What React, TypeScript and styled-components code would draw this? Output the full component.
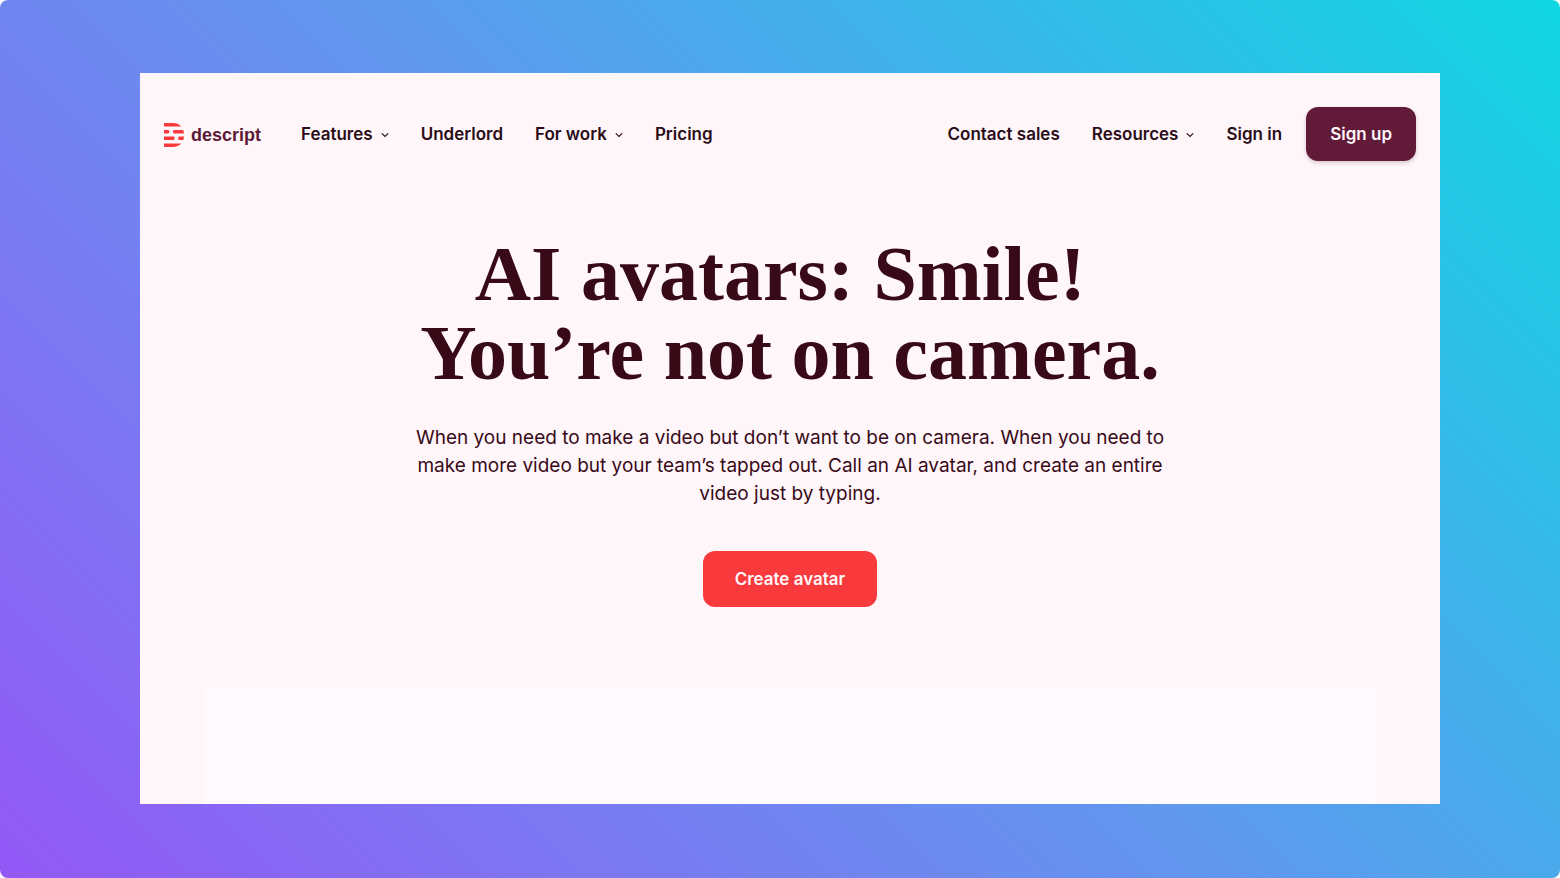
import React from "react";
import styled, { createGlobalStyle } from "styled-components";

const sans = `Inter, "Liberation Sans", sans-serif`;
const ink = "#2b0d18";

const GlobalStyle = createGlobalStyle`
  *, *::before, *::after { box-sizing: border-box; }
  body { margin: 0; background: #fff; font-family: ${sans}; }
`;

const Backdrop = styled.div`
  display: flex;
  min-height: 100vh;
  padding: 73px 120px 74px 140px;
  border-radius: 8px;
  background: linear-gradient(45deg, #9358f7 0%, #7b78f2 25%, #6197ee 50%, #45adeb 67%, #10d7e2 100%);
`;

const Page = styled.div`
  flex: 1;
  display: flex;
  flex-direction: column;
  overflow: hidden;
  background: #fff6fa;
`;

const Header = styled.header`
  display: flex;
  align-items: center;
  justify-content: space-between;
  padding: 34px 24px 0;
`;

const Nav = styled.nav<{ $end?: boolean }>`
  display: flex;
  align-items: center;
  gap: ${(p) => (p.$end ? "24px" : "40px")};
`;

const Links = styled.div`
  display: flex;
  align-items: center;
  gap: 32px;
`;

const Logo = styled.a`
  display: flex;
  align-items: center;
  gap: 6px;
  padding-top: 2px;
  color: #5c1a38;
  font: 700 18px/24px "Liberation Sans", sans-serif;
  text-decoration: none;
`;

const NavLink = styled.a`
  color: ${ink};
  font: 600 17px/24px ${sans};
  text-decoration: none;
  white-space: nowrap;
`;

const MenuButton = styled.button`
  display: flex;
  align-items: center;
  gap: 8px;
  padding: 0;
  border: 0;
  background: none;
  color: ${ink};
  font: 600 17px/24px ${sans};
  white-space: nowrap;
`;

const Button = styled.button<{ $tone: "plum" | "red" }>`
  padding: ${(p) => (p.$tone === "plum" ? "15px 24px" : "16px 32px")};
  border: 0;
  border-radius: 12px;
  background: ${(p) => (p.$tone === "plum" ? "#611a37" : "#f93a3c")};
  box-shadow: ${(p) => (p.$tone === "plum" ? "0 2px 4px rgba(56, 10, 24, 0.2)" : "none")};
  color: #fff6fa;
  font: 600 17px/24px ${sans};
  white-space: nowrap;
`;

const Hero = styled.main`
  display: flex;
  flex-direction: column;
  align-items: center;
  padding: 73px 24px 81px;
  text-align: center;
`;

const Title = styled.h1`
  margin: 0 0 32px;
  color: #380a18;
  font: 700 78px/79px "Liberation Serif", serif;
`;

const Lead = styled.p`
  max-width: 776px;
  margin: 0 0 43px;
  color: #380a18;
  font: 400 19px/28px ${sans};
`;

const Preview = styled.section`
  flex: 1;
  margin: 0 64px;
  background: #fffafd;
`;

const Chevron = () => (
  <svg width="8" height="10" viewBox="0 -2 8 10" fill="none" stroke="currentColor" strokeWidth="1.2" aria-hidden="true">
    <path d="M0.8 2.3L4 5.5L7.2 2.3" />
  </svg>
);

const LogoMark = () => (
  <svg width="21" height="24" viewBox="0 0 21 24" fill="#f93a3c" aria-hidden="true">
    <path d="M0 3.4V0.9Q0 0 0.9 0H9Q14 0 17.3 3.4Z" />
    <path d="M0 7H4Q5.4 7 5.4 8.7T4 10.4H0Z" />
    <path d="M10.4 7H19Q20 8.6 20 10.4H10.4Q8.8 10.4 8.8 8.7T10.4 7Z" />
    <path d="M0 13.6H9.4Q10.6 13.6 10.6 15.3T9.4 17H0Z" />
    <path d="M15.4 13.6H20Q20 15.6 19.2 17H15.4Q14 17 14 15.3T15.4 13.6Z" />
    <path d="M0 20.6V23.1Q0 24 0.9 24H9Q14 24 17.3 20.6Z" />
  </svg>
);

export default function App() {
  return (
    <>
      <GlobalStyle />
      <Backdrop>
        <Page>
          <Header>
            <Nav aria-label="Product">
              <Logo href="#">
                <LogoMark />
                descript
              </Logo>
              <Links>
                <MenuButton type="button">Features <Chevron /></MenuButton>
                <NavLink href="#underlord">Underlord</NavLink>
                <MenuButton type="button">For work <Chevron /></MenuButton>
                <NavLink href="#pricing">Pricing</NavLink>
              </Links>
            </Nav>
            <Nav $end aria-label="Account">
              <Links>
                <NavLink href="#contact">Contact sales</NavLink>
                <MenuButton type="button">Resources <Chevron /></MenuButton>
                <NavLink href="#signin">Sign in</NavLink>
              </Links>
              <Button type="button" $tone="plum">Sign up</Button>
            </Nav>
          </Header>
          <Hero>
            <Title>
              AI avatars: Smile!&nbsp;
              <br />
              You’re not on camera.
            </Title>
            <Lead>
              When you need to make a video but don’t want to be on camera. When you need to make more video
              but your team’s tapped out. Call an AI avatar, and create an entire video just by typing.
            </Lead>
            <Button type="button" $tone="red">Create avatar</Button>
          </Hero>
          <Preview aria-label="Avatar preview" />
        </Page>
      </Backdrop>
    </>
  );
}
